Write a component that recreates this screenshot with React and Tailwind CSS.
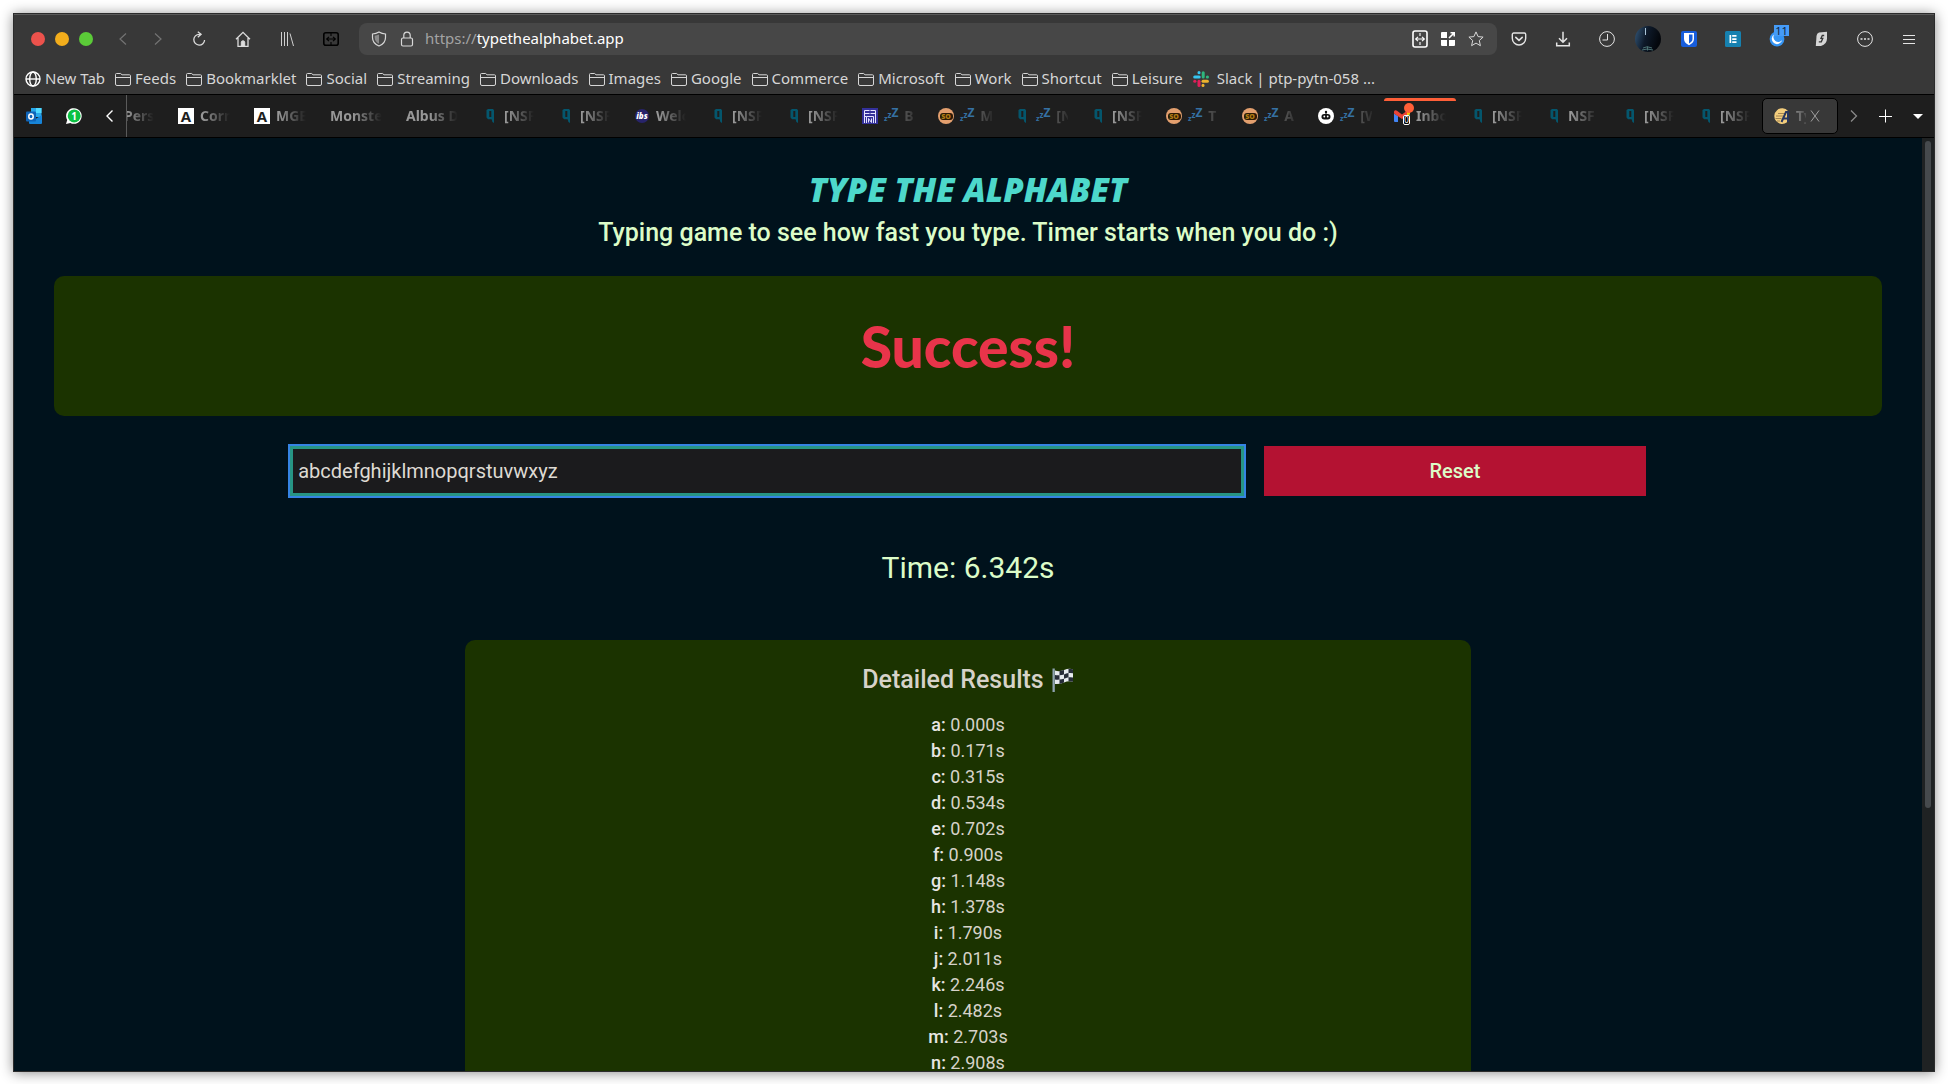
import React from "react";

const S = ({ size = 16, children, className = "", box = "0 0 16 16" }) => (
  <svg
    width={size}
    height={size}
    viewBox={box}
    fill="none"
    stroke="currentColor"
    strokeWidth="1"
    className={"shrink-0 " + className}
    aria-hidden="true"
  >
    {children}
  </svg>
);

const FolderIcon = () => (
  <S className="text-[#d6d6d6]">
    <path d="M.5 13V3.500a1 1 0 0 1 1-1h4.200l1.300 1.300h7.500a1 1 0 0 1 1 1V13a1.500 1.500 0 0 1-1.500 1.500H2A1.500 1.500 0 0 1 .5 13z" />
    <path d="M.5 6.500h15" />
  </S>
);

const GlobeIcon = () => (
  <S className="text-white">
    <g strokeWidth="1.4">
      <circle cx="8" cy="8" r="7" />
      <ellipse cx="8" cy="8" rx="3.300" ry="7" />
      <path d="M1 8h14" />
    </g>
  </S>
);

const SlackIcon = () => (
  <S>
    <g strokeWidth="3" strokeLinecap="round">
      <path d="M1.700 6H6.200" stroke="#36c5f0" />
      <path d="M6 1.500v.2" stroke="#36c5f0" />
      <path d="M10.200 1.700V6" stroke="#2eb67d" />
      <path d="M14.300 6h.2" stroke="#2eb67d" />
      <path d="M10 10.200h4.400" stroke="#ecb22e" />
      <path d="M10 14.300v.2" stroke="#ecb22e" />
      <path d="M6 10.200v4.200" stroke="#e01e5a" />
      <path d="M1.700 10.200h.2" stroke="#e01e5a" />
    </g>
  </S>
);

const SplitIcon = ({ wide }) => (
  <S size={18} box="0 0 18 18">
    <rect
      x={wide ? 1.8 : 2}
      y={wide ? 2.8 : 1}
      width={wide ? 14.4 : 14}
      height={wide ? 12.4 : 16}
      rx="2"
      strokeWidth="1.6"
    />
    <path d="M9 3v3M9 12v3M4.500 9h9M7 6.800 4.600 9 7 11.200M11 6.800 13.400 9 11 11.200" strokeWidth="1.100" />
  </S>
);

const StarIcon = () => (
  <S>
    <path d="M8 .9l2.100 4.700 5 .5-3.800 3.400 1.100 5.200L8 12.100l-4.400 2.600 1.100-5.200L.9 6.100l5-.5z" />
  </S>
);

const navIcons = [
  {
    label: "Reload",
    tone: "text-[#dcdcdc]",
    icon: (
      <S>
        <path d="M9.500 3.300H8.200A5.400 5.400 0 1 0 13.600 9" strokeWidth="1.300" />
        <path d="M6.800.7l3.300 2.600-3.300 2.900" strokeWidth="1.300" />
      </S>
    ),
  },
  {
    label: "Home",
    tone: "text-[#dcdcdc]",
    icon: (
      <S>
        <path d="M1 8.300 8 1.400l7 6.900M3 7v8.300h10V7" strokeWidth="1.300" />
        <path d="M6.300 15v-3.700q0-1.500 1.700-1.500t1.700 1.500V15z" fill="currentColor" />
      </S>
    ),
  },
  {
    label: "Library",
    tone: "text-[#cfcfcf]",
    icon: (
      <S>
        <path d="M2.500 1v14M5.500 1v14M8.500 1v14M11 2.500 14.500 15" />
      </S>
    ),
  },
  { label: "Split view", tone: "text-black", icon: <SplitIcon wide /> },
];

const actionIcons = [
  {
    label: "Pocket",
    icon: (
      <S>
        <path d="M2.700 2h10.600a1.400 1.400 0 0 1 1.400 1.400V7.300a6.700 6.700 0 0 1-13.400 0V3.400A1.400 1.400 0 0 1 2.700 2z" strokeWidth="1.400" />
        <path d="M4.800 6.300 8 9.300l3.200-3" strokeWidth="1.600" strokeLinecap="round" />
      </S>
    ),
  },
  {
    label: "Downloads",
    icon: (
      <S>
        <path d="M8 .8v10M4 7.200l4 4 4-4M1.700 11.500v3.200h12.600v-3.200" strokeWidth="1.500" />
      </S>
    ),
  },
  {
    label: "History",
    icon: (
      <S>
        <circle cx="8" cy="8" r="7.400" />
        <path d="M8.500 3v6H3.500" />
      </S>
    ),
  },
];

const extensionIcons = [
  {
    label: "Password manager",
    icon: (
      <S>
        <rect width="16" height="16" rx="2" fill="#175ddc" stroke="none" />
        <path d="M3 2h10v6c0 3-2.200 4.800-5 6.200C5.200 12.800 3 11 3 8z" fill="#fff" stroke="none" />
        <path d="M8 3.600h3.500V8c0 2-1.500 3.300-3.500 4.400z" fill="#175ddc" stroke="none" />
      </S>
    ),
  },
  {
    label: "Elements",
    icon: (
      <S>
        <rect width="16" height="16" rx="1.500" fill="#1681b0" stroke="none" />
        <path d="M4.500 4v8h1.700V4zM7.200 4h4.300v1.700H7.200zM7.200 7.200h4.300v1.700H7.200zM7.200 10.300h4.300V12H7.200z" fill="#fff" stroke="none" />
      </S>
    ),
  },
  {
    label: "Snoozed tabs",
    badge: "11",
    icon: (
      <S>
        <circle cx="8" cy="8" r="7.400" fill="#3594f3" stroke="none" />
        <path d="M5.400 3.200A5.300 5.300 0 1 0 13.200 9 4.500 4.500 0 0 1 5.400 3.200z" fill="#fff" stroke="none" />
      </S>
    ),
  },
  {
    label: "Privacy",
    icon: (
      <S>
        <path d="M6 1.500 14 .8v6.700q0 5.500-6 7.500H2.800L3.500 5q.3-2.800 2.500-3.500z" fill="#d6d6d6" stroke="none" />
        <path d="M11.200 4.500H9.300L8 7.300h1.800l-1.500 3.500H5.800" stroke="#383838" strokeWidth="1.300" />
      </S>
    ),
  },
  {
    label: "More tools",
    icon: (
      <S>
        <circle cx="8" cy="8" r="7.400" />
        <path d="M3.500 8h2M7 8h2M10.500 8h2" strokeWidth="1.500" />
      </S>
    ),
  },
  {
    label: "Menu",
    icon: (
      <S>
        <path d="M2 4.500h12M2 8.500h12M2 12.500h12" />
      </S>
    ),
  },
];

const bookmarks = [
  "Feeds",
  "Bookmarklet",
  "Social",
  "Streaming",
  "Downloads",
  "Images",
  "Google",
  "Commerce",
  "Microsoft",
  "Work",
  "Shortcut",
  "Leisure",
];

const QIcon = () => (
  <S>
    <path d="M4.500 2 6 1h5l1 1.200V15l-1.600-1-.8-2.700H6L4.500 9.500zM7.300 3v6h2V3z" fill="#04566d" fillRule="evenodd" stroke="none" />
  </S>
);

const AIcon = () => (
  <span className="grid size-4 shrink-0 place-items-center bg-white font-['Open_Sans'] text-[15px] leading-4 font-bold text-[#1e1e1e]">
    A
  </span>
);

const IbsIcon = () => (
  <span className="grid size-4 shrink-0 place-items-center">
    <span className="grid size-[14px] place-items-center rounded-full bg-[#28246b] text-[8px] leading-[14px] font-black text-white italic">
      ibs
    </span>
  </span>
);

const MazeIcon = () => (
  <S>
    <rect width="16" height="16" fill="#33309a" stroke="none" />
    <path d="M2.500 15V2.500h5M2.500 5.500h5M8.500 2.500h5V15M8.500 5.500h5M4.500 15V8.500h7V15M6.500 14.500v-4l3 4v-4M2.500 8.500h2" stroke="#e4e4ff" />
  </S>
);

const FaceIcon = () => (
  <span className="grid size-4 shrink-0 place-items-center rounded-full bg-[#e39f6e]">
    <span className="w-[13px] rounded-[3px] bg-[#2b1a06] text-center text-[7px] leading-[7px] font-black text-[#b17a14]">
      SO
    </span>
  </span>
);

const RobotIcon = () => (
  <S>
    <circle cx="8" cy="8" r="8" fill="#fff" stroke="none" />
    <circle cx="8" cy="4" r="1.200" fill="#111" stroke="none" />
    <rect x="3.500" y="6" width="9" height="5.500" rx="2.700" fill="#111" stroke="none" />
    <circle cx="6.300" cy="8.500" r=".9" fill="#fff" stroke="none" />
    <circle cx="9.700" cy="8.500" r=".9" fill="#fff" stroke="none" />
    <path d="M8 4v3" stroke="#111" />
  </S>
);

const GmailIcon = () => (
  <span className="relative size-4 shrink-0">
    <S>
      <path d="M0 5.500 4 8v6H1a1 1 0 0 1-1-1z" fill="#4285f4" stroke="none" />
      <path d="M12 8l4-3v8a1 1 0 0 1-1 1h-3z" fill="#34a853" stroke="none" />
      <path d="M12 4l4-2v4l-4 3z" fill="#fbbc04" stroke="none" />
      <path d="M0 3.500Q1 1.500 3 2.800L8 6.500l5-3.700v4.400L8 11 0 5.500z" fill="#ea4335" stroke="none" />
    </S>
    <span className="absolute -top-[5px] left-[10px] size-[10px] rounded-full bg-[#ff5f38]" />
    <span className="absolute top-[7px] left-[9px] h-[10px] w-[7px] rounded-[2px] border border-white bg-black text-center text-[8px] leading-[8px] text-white">
      0
    </span>
  </span>
);

const AlphabetIcon = () => (
  <S>
    <path d="M14 3A7.800 7.800 0 1 0 13 14.200L14 9z" fill="#f3cd7c" stroke="none" />
    <path d="M4 5.500h7M2 8h7M1.500 10.500h6M3 13h3" stroke="#8a7048" strokeWidth=".8" />
    <path d="M7.500 14 12 4H14V14M9.500 10.500H14" stroke="#27365f" strokeWidth="2" />
  </S>
);

const favicons = {
  a: <AIcon />,
  q: <QIcon />,
  ibs: <IbsIcon />,
  maze: <MazeIcon />,
  face: <FaceIcon />,
  robot: <RobotIcon />,
  gmail: <GmailIcon />,
  alphabet: <AlphabetIcon />,
};

const tabs = [
  { icon: "a", title: "Pers" },
  { icon: "a", title: "Corn" },
  { icon: "a", title: "MGE" },
  { title: "Monste" },
  { title: "Albus D" },
  { icon: "q", title: "[NSF" },
  { icon: "q", title: "[NSF" },
  { icon: "ibs", title: "Welc" },
  { icon: "q", title: "[NSF" },
  { icon: "q", title: "[NSF" },
  { icon: "maze", title: "B", asleep: true },
  { icon: "face", title: "M", asleep: true },
  { icon: "q", title: "[N", asleep: true },
  { icon: "q", title: "[NSF" },
  { icon: "face", title: "T", asleep: true },
  { icon: "face", title: "A", asleep: true },
  { icon: "robot", title: "[W", asleep: true },
  { icon: "gmail", title: "Inbo", alert: true },
  { icon: "q", title: "[NSF" },
  { icon: "q", title: "NSF" },
  { icon: "q", title: "[NSF" },
  { icon: "q", title: "[NSF" },
  { icon: "alphabet", title: "Ty", active: true },
];

const results = [
  ["a", "0.000s"],
  ["b", "0.171s"],
  ["c", "0.315s"],
  ["d", "0.534s"],
  ["e", "0.702s"],
  ["f", "0.900s"],
  ["g", "1.148s"],
  ["h", "1.378s"],
  ["i", "1.790s"],
  ["j", "2.011s"],
  ["k", "2.246s"],
  ["l", "2.482s"],
  ["m", "2.703s"],
  ["n", "2.908s"],
];

const IconButton = ({ label, className = "w-11", children }) => (
  <button type="button" aria-label={label} className={"flex h-8 shrink-0 items-center justify-center " + className}>
    {children}
  </button>
);

function Toolbar() {
  return (
    <div className="flex h-[50px] items-center border-t border-[#5a5a5a] pr-[3px] pb-[2px] pl-[17px]">
      <div className="flex shrink-0 gap-[10px]">
        <button type="button" aria-label="Close window" className="size-[14px] rounded-full bg-[#ec524c]" />
        <button type="button" aria-label="Minimise window" className="size-[14px] rounded-full bg-[#f2ad1c]" />
        <button type="button" aria-label="Maximise window" className="size-[14px] rounded-full bg-[#5bcb38]" />
      </div>
      <div className="mr-[2px] ml-3 flex shrink-0 text-[#737373]">
        <IconButton label="Back" className="w-[35px]">
          <S><path d="M11 2.500 5 8l6 5.500" strokeWidth="1.200" /></S>
        </IconButton>
        <IconButton label="Forward" className="w-[35px]">
          <S><path d="M5 2.500 11 8l-6 5.500" strokeWidth="1.200" /></S>
        </IconButton>
      </div>
      {navIcons.map((n) => (
        <IconButton key={n.label} label={n.label} className={"w-11 " + n.tone}>{n.icon}</IconButton>
      ))}
      <div className="ml-[6px] flex h-8 min-w-0 flex-1 items-center rounded-lg bg-[#474747] px-3 text-[#d8d8d8]">
        <S>
          <path d="M8 1q3 1.800 6.500 2v3.500Q14.500 12.500 8 15 1.500 12.500 1.500 6.500V3Q5 2.800 8 1z" strokeWidth="1.200" />
          <path d="M8 3.500v9.300Q4 11 3.700 6.500V4.800Q6 4.500 8 3.500z" fill="#8a8a8a" stroke="none" />
        </S>
        <S className="ml-3">
          <rect x="2.500" y="7" width="11" height="8" rx="1.500" strokeWidth="1.200" />
          <path d="M4.800 7V4.300a3.200 3.200 0 0 1 6.400 0V7" strokeWidth="1.200" />
        </S>
        <p className="ml-[10px] flex-1 truncate text-[15px] text-white">
          <span className="text-[#a3a3a3]">https://</span>typethealphabet.app
        </p>
        <div className="flex gap-[10px]">
          <button type="button" aria-label="Split view" className="text-white"><SplitIcon /></button>
          <button type="button" aria-label="Extensions" className="grid size-[18px] place-items-center text-white">
            <S size={14} box="0 0 14 14">
              <path d="M0 1q0-1 1-1h5v6H0zM0 8h6v6H1q-1 0-1-1zM8 8h6v5q0 1-1 1H8z" fill="currentColor" stroke="none" />
              <path d="M8 6l5-5M9.500.8H13.200V4.500" strokeWidth="1.600" />
            </S>
          </button>
          <button type="button" aria-label="Bookmark this page" className="grid size-[18px] place-items-center"><StarIcon /></button>
        </div>
      </div>
      <div className="flex shrink-0 items-center text-[#e4e4e4]">
        {actionIcons.map((n) => (
          <IconButton key={n.label} label={n.label}>{n.icon}</IconButton>
        ))}
        <IconButton label="Profile" className="w-[38px]">
          <S size={26} box="0 0 26 26">
            <defs>
              <linearGradient id="profile" x1="0" y1="0" x2="1" y2=".3">
                <stop offset="0" stopColor="#34587a" />
                <stop offset=".5" stopColor="#0e1a2a" />
                <stop offset="1" stopColor="#04070c" />
              </linearGradient>
            </defs>
            <circle cx="13" cy="13" r="13" fill="url(#profile)" stroke="none" />
            <path d="M10.500 2v7" stroke="#a9c4d8" />
            <path d="M8 22q4-2.500 9 0M7 24q5-2 11 0M12.500 20.500v4" stroke="#4c7274" />
          </S>
        </IconButton>
        {extensionIcons.map((n) => (
          <IconButton key={n.label} label={n.label} className="relative w-11">
            {n.icon}
            {n.badge && (
              <span className="absolute top-[2px] left-[19px] h-[11px] w-[15px] bg-[#459bf8] text-center text-[11px] leading-[11px] text-[#10233c]">
                {n.badge}
              </span>
            )}
          </IconButton>
        ))}
      </div>
    </div>
  );
}

function Bookmarks() {
  return (
    <nav className="flex h-[30px] items-center gap-[10px] overflow-hidden pb-[1px] pl-[11px] text-[15px] whitespace-nowrap text-[#d6d6d6]">
      <a href="#new" className="flex items-center gap-1"><GlobeIcon />New Tab</a>
      {bookmarks.map((b) => (
        <a key={b} href={"#" + b.toLowerCase()} className="flex items-center gap-1"><FolderIcon />{b}</a>
      ))}
      <a href="#slack" className="flex items-center gap-2"><SlackIcon />Slack | ptp-pytn-058 ...</a>
    </nav>
  );
}

const Sleeping = () => (
  <span className="flex h-4 shrink-0 items-start font-bold text-[#3571a3]">
    <span className="pt-[6px] text-[7px] leading-[10px]">z</span>
    <span className="pt-[2px] text-[8px] leading-[10px]">z</span>
    <span className="text-[12px] leading-[10px]">Z</span>
  </span>
);

function Tab({ icon, title, asleep, alert, active }) {
  return (
    <button
      type="button"
      className={
        "relative flex h-9 w-[76px] shrink-0 items-center gap-[6px] text-left " +
        (active ? "rounded-[5px] border border-black bg-[#383838] pl-[11px]" : "pl-3")
      }
    >
      {alert && <span className="absolute top-0 left-[2px] h-[3px] w-[72px] rounded-t-[3px] bg-[#ff5f38]" />}
      {icon && favicons[icon]}
      {asleep && <Sleeping />}
      <span
        className={
          "overflow-hidden text-[14px] leading-5 font-bold whitespace-nowrap " +
          (asleep
            ? "w-[12px] text-[#4c4c4c] [mask-image:linear-gradient(90deg,#000_30%,#0004_100%)]"
            : active
              ? "w-[10px] text-[#979797] [mask-image:linear-gradient(90deg,#000c,#0003)]"
              : icon
                ? "w-[30px] text-[#979797] [mask-image:linear-gradient(90deg,#000_10%,#0000_100%)]"
                : "w-[52px] text-[#979797] [mask-image:linear-gradient(90deg,#000_45%,#0000_100%)]")
        }
      >
        {title}
      </span>
      {active && (
        <S size={12} box="0 0 12 12" className="-ml-[3px] text-[#a0a0a0]">
          <path d="M2 .5l8 11M10 .5 2 11.500" />
        </S>
      )}
    </button>
  );
}

function TabBar() {
  return (
    <div className="flex h-[44px] items-center border-y border-black bg-[#1e1e1e] text-white">
      <button type="button" aria-label="Outlook" className="flex w-10 shrink-0 justify-center">
        <S>
          <path d="M5 0h10.500v9H5z" fill="#28a8ea" stroke="none" />
          <path d="M10 0h5.500v5H10z" fill="#50d9ff" stroke="none" />
          <path d="M3 7l6.500 4L16 7v8a1 1 0 0 1-1 1H4a1 1 0 0 1-1-1z" fill="#1784d8" stroke="none" />
          <rect y="3.500" width="10" height="10" rx="1" fill="#0f64b8" stroke="none" />
          <ellipse cx="5" cy="8.500" rx="2.200" ry="2.500" stroke="#fff" strokeWidth="1.500" />
        </S>
      </button>
      <button type="button" aria-label="WhatsApp" className="flex w-10 shrink-0 justify-center">
        <span className="relative grid size-4 place-items-center">
          <S className="absolute inset-0">
            <path d="M0 16l1.200-4A7.800 7.800 0 1 1 4.300 14.900z" fill="#fff" stroke="none" />
            <circle cx="8.200" cy="7.900" r="6.500" fill="#0cc143" stroke="none" />
          </S>
          <span className="relative text-[10px] leading-4 font-bold">1</span>
        </span>
      </button>
      <button type="button" aria-label="Scroll tabs left" className="flex w-8 shrink-0 justify-center">
        <S><path d="M10.500 2.500 5 8l5.500 5.500" strokeWidth="1.400" /></S>
      </button>
      <div className="flex h-full min-w-0 flex-1 items-center justify-end overflow-hidden border-l border-[#5a5a5a]">
        {tabs.map((t, i) => (
          <Tab key={i} {...t} />
        ))}
      </div>
      <button type="button" aria-label="Scroll tabs right" className="flex w-8 shrink-0 justify-center text-[#8a8a8a]">
        <S><path d="M5 2.500 10.500 8 5 13.500" strokeWidth="1.300" /></S>
      </button>
      <button type="button" aria-label="New tab" className="flex w-8 shrink-0 justify-center">
        <S><path d="M7.500 1.500v13M1 8.500h13" /></S>
      </button>
      <button type="button" aria-label="List all tabs" className="flex w-8 shrink-0 justify-center">
        <S><path d="M3 6h10l-5 5z" fill="currentColor" stroke="none" /></S>
      </button>
    </div>
  );
}

const FlagIcon = () => (
  <svg width="22" height="24" viewBox="0 0 22 24" role="img" aria-label="chequered flag" className="shrink-0">
    <path d="M.5.5h2.300V24H.5z" fill="#8fa3b0" />
    <path d="M3 2.500q4.500 1.500 9-.5t9-.8v12.500q-4.500-1.200-9 .8t-9 1.500z" fill="#e6eaee" />
    <g fill="#262c38">
      <path d="M7.500 2.800q2.500 0 4.500-.8v4.500q-2 .8-4.500.8zM16.500.8q2.500 0 4.500.4v4q-2-.5-4.500-.2zM3 7q2 .5 4.500.3v4.300Q5 11.800 3 11.500zM12 6.500q2-1.200 4.500-1.500v4.300q-2.500.5-4.500 1.500zM7.500 11.600q2.500 0 4.500-.8v3.700q-2 1-4.500 1.400zM16.500 9.300q2.500-.4 4.500.2v4.200q-2-.6-4.500-.4z" />
    </g>
  </svg>
);

function Page() {
  return (
    <main className="flex min-w-0 flex-1 flex-col items-center overflow-hidden bg-[#00121c] pt-[27px] font-[Roboto,sans-serif] text-[#dcfcc8]">
      <h1 className="font-['Noto_Sans','Open_Sans',sans-serif] text-[33px] leading-[50px] font-black text-[#4dd8cb] italic">
        TYPE THE ALPHABET
      </h1>
      <p className="text-[25px] leading-9 font-medium">
        Typing game to see how fast you type. Timer starts when you do :)
      </p>
      <div className="mt-[25px] w-full px-10">
        <div className="flex h-[140px] items-center justify-center rounded-[10px] bg-[#1b3300]">
          <p className="font-[Lato,sans-serif] text-[57px] leading-[70px] font-black text-[#e8344a]">Success!</p>
        </div>
      </div>
      <form className="mt-[30px] flex w-full justify-center gap-5" onSubmit={(e) => e.preventDefault()}>
        <input
          type="text"
          aria-label="Type the alphabet"
          defaultValue="abcdefghijklmnopqrstuvwxyz"
          className="h-[50px] w-1/2 border-3 border-[#279584] bg-[#1b1b1d] px-[5px] text-[20px] text-[#dedad3] outline-2 outline-[#3584e4]"
        />
        <button type="reset" className="h-[50px] w-1/5 bg-[#b41232] text-[20px] font-medium">Reset</button>
      </form>
      <p className="mt-12 text-[30px] leading-[48px]">Time: 6.342s</p>
      <div className="mt-12 flex w-full flex-1 justify-center px-10">
        <section className="flex w-[55%] flex-col items-center rounded-t-[10px] bg-[#1b3300] pt-5 text-[#d6d2c9]">
          <h2 className="flex items-center gap-2 text-[25px] leading-10 font-medium">
            Detailed Results <FlagIcon />
          </h2>
          <ul className="mt-3 text-center text-[18px] leading-[26px]">
            {results.map(([k, v]) => (
              <li key={k}>
                <span className="font-medium text-[#e8e6e3]">{k}:</span> {v}
              </li>
            ))}
          </ul>
        </section>
      </div>
    </main>
  );
}

export default function App() {
  return (
    <div className="h-screen bg-white p-[13px] pb-3 font-['Noto_Sans',sans-serif]">
      <div className="flex h-full flex-col overflow-hidden border border-[#2c2c2c] bg-[#383838] shadow-[0_1px_12px_rgba(0,0,0,0.45)]">
        <Toolbar />
        <Bookmarks />
        <TabBar />
        <div className="flex min-h-0 flex-1">
          <Page />
          <div className="w-3 shrink-0 bg-[#1f2223] px-[3px] py-[3px]">
            <div className="h-[72%] rounded-full bg-[#464a4d]" />
          </div>
        </div>
      </div>
    </div>
  );
}
